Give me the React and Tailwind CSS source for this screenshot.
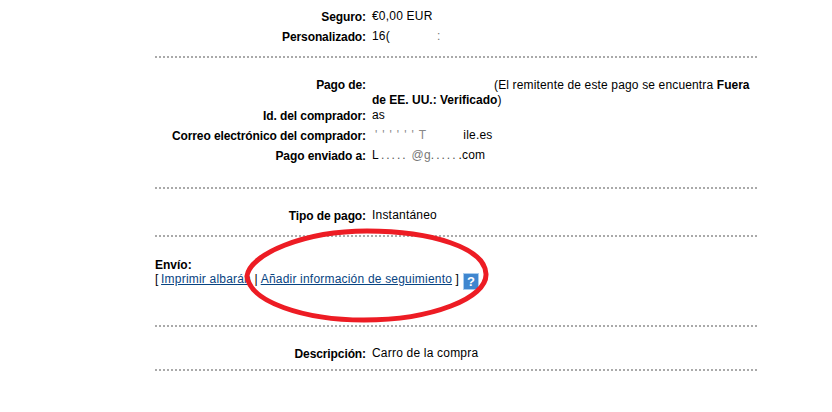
function Row({ label, children, className = '' }) {
  return (
    <div className={`flex ${className}`}>
      <div className="w-[211px] shrink-0 text-right font-bold tracking-[-0.1px]">{label}</div>
      <div className="ml-[6px] w-[385px] -translate-y-px tracking-[0.2px]">{children}</div>
    </div>
  );
}

function Divider({ className = '' }) {
  return <div className={`h-[2px] w-[602px] border-t-2 border-dotted border-[#aaaaaa] ${className}`} />;
}

function HelpIcon() {
  return (
    <span className="ml-[5px] inline-flex h-[15px] w-[14px] items-center justify-center bg-[#3f86cf] align-[-3px] text-[13px] leading-none font-bold text-white outline outline-1 outline-[#a9cdef]">
      ?
    </span>
  );
}

export default function App() {
  return (
    <div className="relative h-[412px] w-[832px] overflow-hidden bg-white pl-[155px] font-['Liberation_Sans',Arial,sans-serif] text-[12px] leading-[15px] text-black">
      <Row label="Seguro:" className="pt-[10px]">€0,00 EUR</Row>
      <Row label="Personalizado:" className="pt-[5px]">
        <span>16(</span>
        <span className="ml-[47px] text-[#777777]">:</span>
      </Row>
      <Divider className="mt-[11px]" />

      <Row label="Pago de:" className="mt-[20px]">
        <div className="pt-px tracking-[0.15px]">
          <span className="pl-[122px]">(El remitente de este pago se encuentra <b className="tracking-normal">Fuera de EE. UU.: Verificado</b>)</span>
        </div>
      </Row>
      <Row label="Id. del comprador:" className="-mt-px pt-px">as</Row>
      <Row label="Correo electrónico del comprador:" className="pt-[5px]">
        <span className="ml-[3px] tracking-[5px] text-[#888888]">''''''</span>
        <span className="text-[#888888]">T</span>
        <span className="ml-[37px]">ile.es</span>
      </Row>
      <Row label="Pago enviado a:" className="pt-[5px]">
        <span>L</span>
        <span className="ml-[2px] tracking-[2px] text-[#555555]">.....</span>
        <span className="ml-[4px] text-[#777777]">@g</span>
        <span className="tracking-[2px] text-[#555555]">.....</span>
        <span className="ml-[1px]">.com</span>
      </Row>
      <Divider className="mt-[23px]" />

      <Row label="Tipo de pago:" className="mt-[20px]">Instantáneo</Row>
      <Divider className="mt-[11px]" />

      <div className="mt-[21px] font-bold">Envío:</div>
      <div className="-mt-px tracking-[0.2px]">
        [ <a className="-ml-[1px] text-[#084482] underline">Imprimir albarán</a> | <a className="text-[#084482] underline">Añadir información de seguimiento</a> ]
        <HelpIcon />
      </div>
      <Divider className="mt-[36px]" />

      <Row label="Descripción:" className="mt-[20px]">Carro de la compra</Row>
      <Divider className="mt-[7px]" />

      {/* hand drawn circle on top of the screenshot */}
      <svg className="absolute top-[226px] left-[242px]" width="250" height="100" viewBox="0 0 250 100" fill="none">
        <path
          d="M5 50C8 28 62 5 125 5C190 5 243 22 244 48C245 72 190 94 122 94C62 94 8 76 5 50Z"
          stroke="#ed1c24"
          strokeWidth="5"
        />
      </svg>
    </div>
  );
}
